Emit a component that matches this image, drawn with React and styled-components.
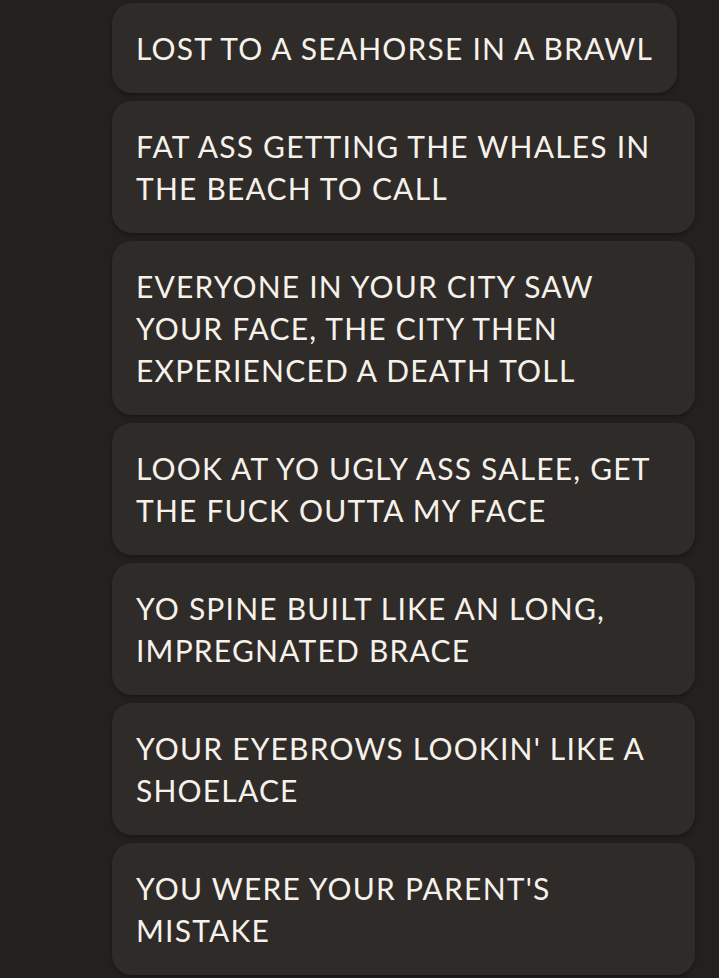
import React from "react";
import styled, { createGlobalStyle } from "styled-components";

const GlobalStyle = createGlobalStyle`
  html, body {
    margin: 0;
    padding: 0;
    background: #232120;
  }
`;

const Page = styled.div`
  min-height: 978px;
  background: #232120;
  padding: 3px 24px 0 112px;
  box-sizing: border-box;
  display: flex;
  flex-direction: column;
  align-items: flex-start;
  gap: 8px;
`;

const Bubble = styled.div`
  max-width: 583px;
  box-sizing: border-box;
  padding: 24px 24px;
  background: #2e2b29;
  border-radius: 20px;
  box-shadow: 0 2px 4px rgba(0, 0, 0, 0.35);
  color: #f6f1ea;
  font-family: Lato, "Noto Sans", sans-serif;
  font-weight: 400;
  font-size: 30px;
  line-height: 42px;
  letter-spacing: 1.2px;
  text-transform: uppercase;
`;

const messages = [
  "LOST TO A SEAHORSE IN A BRAWL",
  "FAT ASS GETTING THE WHALES IN THE BEACH TO CALL",
  "EVERYONE IN YOUR CITY SAW YOUR FACE, THE CITY THEN EXPERIENCED A DEATH TOLL",
  "LOOK AT YO UGLY ASS SALEE, GET THE FUCK OUTTA MY FACE",
  "YO SPINE BUILT LIKE AN LONG, IMPREGNATED BRACE",
  "YOUR EYEBROWS LOOKIN' LIKE A SHOELACE",
  "YOU WERE YOUR PARENT'S MISTAKE",
];

const App = () => {
  return (
    <>
      <GlobalStyle />
      <Page>
        {messages.map((m) => (
          <Bubble key={m}>{m}</Bubble>
        ))}
      </Page>
    </>
  );
};

export default App;
